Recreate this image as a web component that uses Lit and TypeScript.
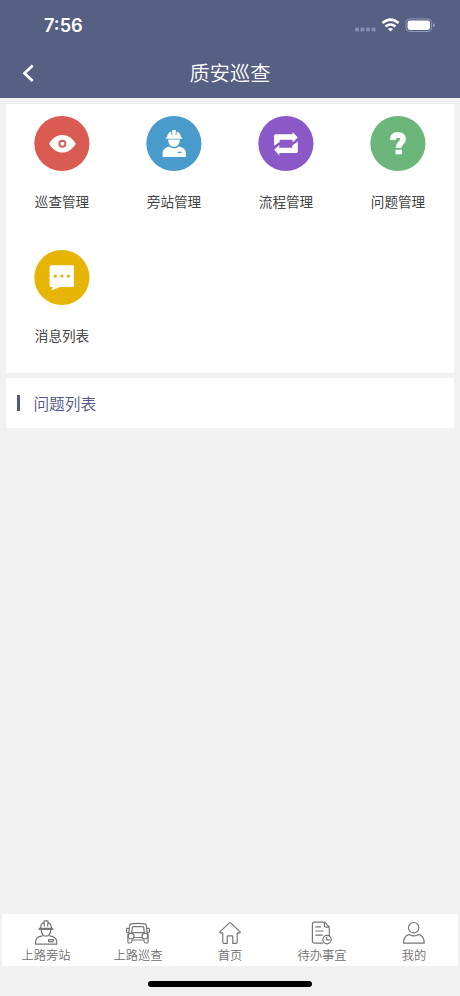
import { LitElement, html, svg, css } from "lit";
import { customElement } from "lit/decorators.js";

const menu = [
  {
    label: "巡查管理",
    tone: "red",
    icon: svg`<path fill="#fff" d="M14.600 27.700C18 22.400 22.600 19 28 19s10 3.400 13.400 8.700C38 33 33.400 36.600 28 36.600S18 33 14.600 27.700Z"/>
      <circle cx="28" cy="27.700" r="3" fill="none" stroke="#da5b52" stroke-width="1.900"/>`,
  },
  {
    label: "旁站管理",
    tone: "blue",
    icon: svg`<g fill="#fff">
      <path d="M20.700 21.300c0-2.900 1.600-5.100 4.100-5.900l.4 3.500h.8l-.2-4.800h3.600l-.2 4.800h.8l.4-3.500c2.500.8 4.100 3 4.100 5.900l1.300.4v1H19.400v-1Z"/>
      <path d="M21.800 23.400h11.600c0 4.200-2.300 7.400-5.800 7.400s-5.800-3.200-5.800-7.400Z"/>
      <path d="M16.200 41v-4c0-3.300 2.200-5.500 6.600-6.500 1.300 1.200 3 1.800 4.900 1.800s3.600-.6 4.900-1.800c4.600 1 6.900 3.200 6.900 6.500v4Z"/></g>
      <path d="M31 35.700h4.200v1.300h-3.700Z" fill="#489bcb"/>`,
  },
  {
    label: "流程管理",
    tone: "purple",
    icon: svg`<g fill="#fff">
      <path d="M15.700 29.800V20q0-1.700 1.700-1.700h16.800V16l5.100 5.600-5.100 4.900v-2.800H21.200v2.200Z"/>
      <path transform="rotate(180 27.550 27.700)" d="M15.700 29.800V20q0-1.700 1.700-1.700h16.800V16l5.100 5.600-5.100 4.900v-2.800H21.200v2.200Z"/></g>`,
  },
  {
    label: "问题管理",
    tone: "green",
    icon: svg`<path fill="none" stroke="#fff" stroke-width="5.700" d="M22.200 24c.2-3.500 2.300-5.200 5.300-5.200 3.200 0 5.200 1.600 5.200 4.300 0 4-4.500 3.400-4.500 8.900"/>
      <rect x="25.200" y="33.800" width="6.300" height="4.500" rx=".5" fill="#fff"/>`,
  },
  {
    label: "消息列表",
    tone: "yellow",
    icon: svg`<path fill="#fff" d="M16.700 15.300h21.300q1.500 0 1.500 1.500v18.700q0 1.500-1.500 1.500H25.700l-8.400 3.200.9-3.200h-1.500q-1.500 0-1.500-1.500V16.800q0-1.500 1.500-1.500Z"/>
      <g fill="#e6b505"><circle cx="20.900" cy="26.100" r="1.700"/><circle cx="27.500" cy="26.100" r="1.700"/><circle cx="34.100" cy="26.100" r="1.700"/></g>`,
  },
];

const tabs = [
  {
    label: "上路旁站",
    icon: svg`<path d="M6.600 8.300C6.600 5 8 3.100 10 2.400l.4 3.500M17.400 8.300C17.400 5 16 3.100 14 2.400l-.4 3.500M10.100 2.300V.9h3.800v1.400M5.300 8.300h13.400v1.200H5.300ZM7.300 9.500c0 4 1.900 6.700 4.700 6.700s4.700-2.700 4.700-6.700"/>
      <path d="M8.300 15.800c-4.300.7-6.700 2.900-6.700 6v2.400h21.100v-2.400c0-3.100-2.400-5.300-6.900-6M14.600 19.600h4.600v2h-4.600Z"/>`,
  },
  {
    label: "上路巡查",
    icon: svg`<path d="M2.900 12.900 3.700 5.200q.2-1.200 1.400-1.400 6.900-1 13.800 0 1.200.2 1.400 1.400l.8 7.700M5.700 12.600l.6-5.100q.1-.9.900-.9h9.600q.8 0 .9.900l.6 5.100ZM3.200 8.300H1.400q-.8 0-.8.700v2.600q0 .9.800.9h1.300M20.800 8.300h1.800q.8 0 .8.700v2.600q0 .9-.8.900h-1.300M2.900 12.700Q1.900 13.900 1.900 15.500V22q0 1 1 1h1.700q1 0 1.200-1l.3-2h11.800l.3 2q.2 1 1.200 1h1.700q1 0 1-1v-6.500q0-1.600-1-2.800M8 17.500h8"/>
      <circle cx="5.100" cy="16.100" r="2.900" fill="#fff"/><circle cx="18.900" cy="16.100" r="2.900" fill="#fff"/>`,
  },
  {
    label: "首页",
    icon: svg`<path d="M11.100 3.100q.9-.8 1.800 0l9 8.500q.8 1-.2 1.300h-2.500v9.300q0 1.200-1.200 1.200h-3.200v-6.700q0-.8-.8-.8h-4q-.8 0-.8.800v6.700H6q-1.200 0-1.200-1.200v-9.300H2.300q-1-.3-.2-1.300Z"/>`,
  },
  {
    label: "待办事宜",
    icon: svg`<path d="M12.700 23.100H4.600q-2.200 0-2.200-2.200V4.400q0-2.200 2.200-2.200h10.200l4.500 4.900v8.700M14.400 2.400v3.300q0 1.400 1.400 1.400h3.200M5.800 6.900h4.800M5.800 11h7.200M5.800 15.200h6.500"/>
      <circle cx="17" cy="19.600" r="4.200" fill="#fff"/><path d="M16.700 17.300v2.600h2.600"/>`,
  },
  {
    label: "我的",
    icon: svg`<circle cx="11.700" cy="7.700" r="5.200"/><path d="M7.200 14.400c-3.600 1-5.700 4-5.700 8.800h20.700c0-4.800-2.100-7.800-5.700-8.800-2.900 1.900-6.400 1.900-9.300 0Z"/>`,
  },
];

@customElement("app-root")
export class AppRoot extends LitElement {
  static styles = css`
    :host {
      display: flex;
      flex-direction: column;
      height: 996px;
      background: #f1f1f1;
      overflow: hidden;
      font-family: "Noto Sans CJK SC", sans-serif;
      font-weight: 400;
    }
    svg { display: block; }
    header { height: 98px; background: #566083; color: #fff; }
    .status { display: flex; align-items: center; height: 50px; padding: 0 25px 0 44px; }
    .time { flex: 1; font: 600 18.200px/50px Inter, sans-serif; }
    .nav { display: grid; grid-template-columns: 60px 1fr 60px; align-items: center; height: 46px; }
    .back { margin-left: 21px; }
    .title { text-align: center; font-size: 20.200px; line-height: 46px; font-weight: 350; }
    .menu {
      display: grid;
      grid-template-columns: repeat(4, 112px);
      grid-auto-rows: 134.300px;
      height: 257px;
      margin: 6px 6px 0;
      padding-top: 12px;
      background: #fff;
    }
    .item { display: flex; flex-direction: column; align-items: center; color: #444; }
    .disc { width: 56px; height: 55px; overflow: visible; }
    .red { fill: #da5b52; }
    .blue { fill: #489bcb; }
    .purple { fill: #8a58c7; }
    .green { fill: #6cb67c; }
    .yellow { fill: #e6b505; }
    .label { margin-top: 19px; font-size: 13.600px; line-height: 22px; }
    .section { display: flex; align-items: center; height: 50px; margin: 5px 6px 0; padding-left: 11px; background: #fff; }
    .mark { width: 3.400px; height: 16px; margin-right: 13px; background: #515684; }
    .heading { padding-top: 2px; font-size: 15.700px; font-weight: 350; color: #515684; line-height: 24px; }
    .tabs { display: flex; justify-content: center; height: 52px; margin: auto 2px 0; background: #fff; }
    .tab { flex: none; width: 92px; display: flex; flex-direction: column; align-items: center; padding-top: 6px; color: #707070; }
    .glyph { fill: none; stroke: #777; stroke-width: 1.200; stroke-linejoin: round; stroke-linecap: round; }
    .name { font-size: 12.300px; font-weight: 350; line-height: 18px; }
    .home { flex: none; width: 164px; height: 6px; margin: 15px auto 9px; border-radius: 3px; background: #000; }
  `;

  render() {
    return html`
      <header>
        <div class="status">
          <div class="time">7:56</div>
          <svg width="81" height="20" viewBox="0 0 81 20">
            <g fill="#858db0">
              <rect x="1" y="12.500" width="4" height="4" rx="1"/><rect x="6.500" y="12.500" width="4" height="4" rx="1"/>
              <rect x="12" y="12.500" width="4" height="4" rx="1"/><rect x="17.500" y="12.500" width="4" height="4" rx="1"/>
            </g>
            <g fill="none" stroke="#fff" stroke-width="2.600">
              <path d="M28.400 8.100q8.100-6.900 16.200 0"/><path d="M31.500 11.600q5-4.200 10 0"/>
            </g>
            <path fill="#fff" d="M36.500 16.600 33.900 14q2.600-2.100 5.200 0Z"/>
            <rect x="52" y="3.900" width="25.600" height="12.600" rx="3.600" fill="none" stroke="#9299b6"/>
            <rect x="53.600" y="5.500" width="22.400" height="9.400" rx="2.300" fill="#fff"/>
            <path fill="#9299b6" d="M79 8.200q1.800.6 1.800 2t-1.800 2Z"/>
          </svg>
        </div>
        <div class="nav">
          <svg class="back" width="16" height="20" viewBox="0 0 16 20">
            <path d="M11.700 2.400 3.500 10.200l8.200 7.800" fill="none" stroke="#fff" stroke-width="2.700"/>
          </svg>
          <div class="title">质安巡查</div>
        </div>
      </header>
      <div class="menu">
        ${menu.map((m) => html`
          <div class="item">
            <svg class="disc" viewBox="-0.4 0 56 55">
              <circle class=${m.tone} cx="27.500" cy="27.500" r="27.600"/>${m.icon}
            </svg>
            <div class="label">${m.label}</div>
          </div>`)}
      </div>
      <div class="section"><div class="mark"></div><div class="heading">问题列表</div></div>
      <div class="tabs">
        ${tabs.map((t) => html`
          <div class="tab">
            <svg class="glyph" width="24" height="26" viewBox="0 0 24 26">${t.icon}</svg>
            <div class="name">${t.label}</div>
          </div>`)}
      </div>
      <div class="home"></div>
    `;
  }
}
